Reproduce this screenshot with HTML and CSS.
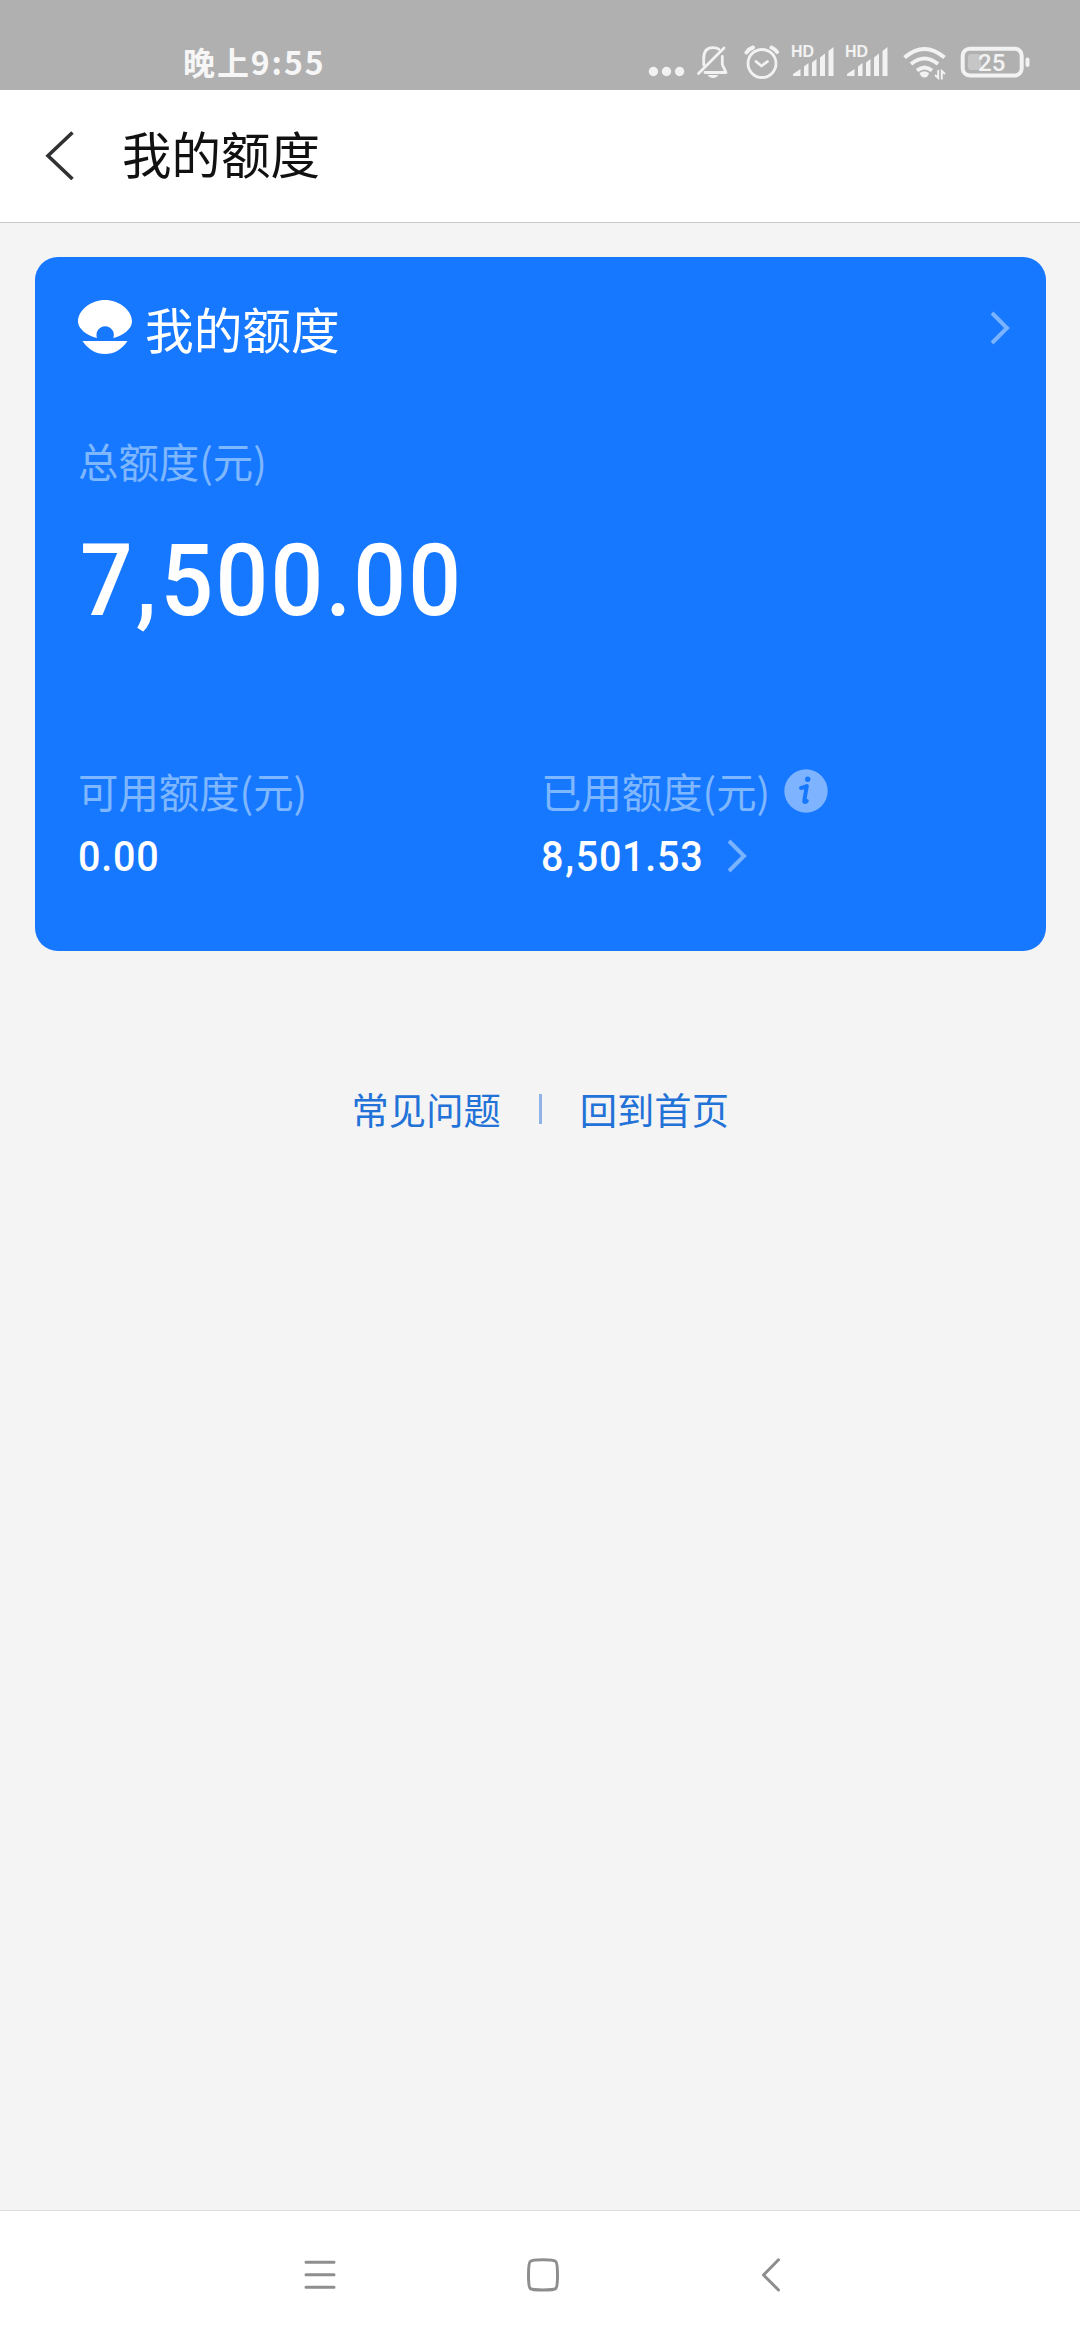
FILE: index.html
```
<!DOCTYPE html>
<html lang="zh-CN">
<head>
<meta charset="utf-8">
<title>我的额度</title>
<link rel="stylesheet" href="styles.css">
</head>
<body>
<div class="screen">
  <div class="status">
    <span class="clock">晚上9:55</span>
    <div class="status-icons">
      <svg class="dots" width="37" height="44" viewBox="648 40 37 44"><circle cx="653.4" cy="71.5" r="4.7"/><circle cx="666.5" cy="71.5" r="4.7"/><circle cx="679.6" cy="71.5" r="4.7"/></svg>
      <svg class="bell" width="33" height="44" viewBox="696 40 33 44"><path class="line" d="M698.5 73.5 724 48M703.7 65V58.5Q703.7 47.6 713 47.6Q716.5 47.6 718.8 49.2M722.3 56.5V64.5L726 72.5H705"/><path d="M707.5 75H718.5Q716.5 78 713 78Q709.500 78 707.500 75Z"/></svg>
      <svg class="alarm" width="36" height="44" viewBox="744 40 36 44"><circle class="line" cx="762" cy="63.500" r="14"/><path class="line" d="M756 61.500 761.500 66 767.500 61.500"/><path class="line thick" d="M746.500 52.500Q749 48.800 753 47.500M771.500 47.500Q775 49 777 52"/></svg>
      <svg class="signal" width="43" height="44" viewBox="791 40 43 44"><text x="791" y="57" textLength="23" lengthAdjust="spacingAndGlyphs">HD</text><path d="M793 76V74L800.500 69V76ZM804 76V66.500L808.500 63V76ZM812 76V62.500L816.500 59V76ZM820 76V57.500L825 53.500V76ZM828.500 76V51L833.500 47V76Z"/></svg>
      <svg class="signal second" width="43" height="44" viewBox="791 40 43 44"><text x="791" y="57" textLength="23" lengthAdjust="spacingAndGlyphs">HD</text><path d="M793 76V74L800.500 69V76ZM804 76V66.500L808.500 63V76ZM812 76V62.500L816.500 59V76ZM820 76V57.500L825 53.500V76ZM828.500 76V51L833.500 47V76Z"/></svg>
      <svg class="wifi" width="44" height="44" viewBox="903 40 44 44"><path class="arc" d="M904.500 57.500Q924.500 40.500 944.500 57.500M911 64Q924.500 53 938 64M917 70.500Q924.500 64.500 932 70.500"/><path d="M919.500 73Q924.500 69.500 929 73Q928 77.500 924.300 77.500Q921 77.500 919.500 73Z"/><path class="tiny" d="M935 75 938.200 78V70M945 74 941.800 71V79.500"/></svg>
      <svg class="battery" width="70" height="44" viewBox="960 40 70 44"><rect class="frame" x="962.700" y="48.700" width="59" height="26.800" rx="7"/><rect class="charge" x="968" y="54" width="13" height="16" rx="3"/><rect x="1025.500" y="57.500" width="4" height="9.500" rx="2"/><text x="978" y="71">25</text></svg>
    </div>
  </div>
  <header class="header">
    <svg class="back" width="30" height="50" viewBox="45 129 30 50"><path d="M72.500 131.500 48 154.800 72.500 178"/></svg>
    <h1 class="title">我的额度</h1>
  </header>
  <main class="content">
    <section class="card">
      <div class="card-head">
        <svg class="logo" width="54" height="54" viewBox="0 0 54 54"><path d="M27 0C41 0 54 10 54 21.500C54 29 45 35.500 35.300 38A8.700 8.700 0 1 0 19 38C9 35.500 0 29 0 21.500C0 10 13 0 27 0Z"/><path d="M4.500 41H49.500C44 49.500 36 54 27 54C18 54 10 49.500 4.500 41Z"/></svg>
        <h2 class="card-title">我的额度</h2>
        <svg class="chevron" width="20" height="34" viewBox="0 0 20 34"><path d="M2 2 17 17 2 32"/></svg>
      </div>
      <div class="label">总额度(元)</div>
      <div class="total"><span class="number">7<span class="comma">,</span>500.00</span></div>
      <div class="split">
        <div>
          <div class="label">可用额度(元)</div>
          <div class="amount"><span class="number">0.00</span></div>
        </div>
        <div>
          <div class="label">已用额度(元)
            <svg class="info" width="44" height="44" viewBox="0 0 44 44"><circle cx="22" cy="22" r="21.700"/><circle class="mark" cx="23.700" cy="10.200" r="2.700"/><path class="stem" d="M17 19Q20 18.500 22.800 17L20.300 31.500Q20 34 22.800 32"/></svg>
          </div>
          <div class="amount"><span class="number used">8<span class="comma">,</span>501.53</span>
            <svg class="chevron" width="20" height="34" viewBox="0 0 20 34"><path d="M2 2 17 17 2 32"/></svg>
          </div>
        </div>
      </div>
    </section>
    <nav class="links"><a>常见问题</a><span class="divider"></span><a>回到首页</a></nav>
  </main>
  <footer class="navbar">
    <svg width="32" height="36" viewBox="0 0 32 36"><path d="M2 5.200H30M2 17.800H30M2 30.200H30"/></svg>
    <svg width="34" height="36" viewBox="0 0 34 36"><path d="M17 2.800Q28 2.800 29.800 4.500Q31.500 6 31.500 18Q31.500 30 29.800 31.500Q28 33 17 33Q6 33 4.200 31.500Q2.500 30 2.500 18Q2.500 6 4.200 4.500Q6 2.800 17 2.800Z"/></svg>
    <svg width="20" height="36" viewBox="0 0 20 36"><path d="M17.500 2.800 2.500 18 17.500 33"/></svg>
  </footer>
</div>
</body>
</html>
```
FILE: styles.css
```
* { box-sizing: border-box; }
body { margin: 0; }
h1, h2 { margin: 0; font-weight: 400; }
svg { display: block; flex: none; }

.screen {
  display: flex;
  flex-direction: column;
  width: 1080px;
  height: 2340px;
  background: #f4f4f4;
  font-family: "Noto Sans CJK SC", sans-serif;
  white-space: nowrap;
  overflow: hidden;
}

.status {
  display: flex;
  justify-content: space-between;
  height: 90px;
  padding: 40px 50px 0 183px;
  background: #b0b0b0;
  color: #f6f6f6;
}
.clock { font-size: 32px; font-weight: 700; line-height: 42px; letter-spacing: 1.900px; }
.status-icons { display: flex; fill: #f2f2f2; }
.status-icons .line { fill: none; stroke: #f2f2f2; stroke-width: 2.800; stroke-linecap: round; stroke-linejoin: round; }
.status-icons .thick { stroke-width: 4; }
.bell { margin-left: 11px; }
.alarm { margin-left: 15px; }
.signal { margin-left: 11px; }
.signal text { font: 700 16.500px "Liberation Sans", sans-serif; }
.wifi { margin-left: 15px; }
.wifi .arc { fill: none; stroke: #f2f2f2; stroke-width: 4; }
.wifi .tiny { fill: none; stroke: #f2f2f2; stroke-width: 2; }
.battery { margin-left: 13px; }
.battery .frame { fill: none; stroke: #f2f2f2; stroke-width: 4; }
.battery .charge { fill: #c6c6c6; }
.battery text { font: 500 24px Roboto, sans-serif; }

.header {
  display: flex;
  align-items: center;
  gap: 47px;
  height: 133px;
  padding: 0 45px 3px;
  background: #fff;
  border-bottom: 1px solid #c4c8c6;
}
.back path { fill: none; stroke: #303133; stroke-width: 3.600; }
.title { padding-bottom: 4px; color: #111; font-size: 49.500px; line-height: 70px; }

.content { flex: 1; padding: 34px 34.500px 0 35px; }
.card {
  height: 694px;
  padding: 36px 36px 0 43px;
  border-radius: 23px;
  background: #1677ff;
  color: #fff;
}
.card-head { display: flex; align-items: center; height: 70px; fill: #fff; }
.logo { margin-bottom: 2px; }
.card-title { flex: 1; margin-left: 13px; font-size: 48.700px; line-height: 70px; }
.chevron path { fill: none; stroke: #7ab3ff; stroke-width: 4; }
.label { display: flex; align-items: center; height: 60px; color: #7fb7ff; font-size: 40.400px; line-height: 60px; }
.card > .label { margin-top: 68px; }
.total {
  margin-top: 35px;
  height: 110px;
  padding-left: 2px;
  font: 500 101px/110px Roboto, sans-serif;
  letter-spacing: 2.300px;
}
.number { display: inline-block; transform: scaleX(0.92); transform-origin: left; }
.total .comma { margin: 0 2px 0 1px; }
.split { display: grid; grid-template-columns: 463px 1fr; margin-top: 125px; }
.amount { display: flex; align-items: center; height: 70px; font: 500 43px/70px Roboto, sans-serif; letter-spacing: 0.800px; }
.amount .comma { margin: 0 1px; }
.used { width: 175px; }
.amount .chevron { margin-left: 11px; }
.info { margin-left: 14px; fill: #7db3ff; }
.info .mark { fill: #1677ff; }
.info .stem { fill: none; stroke: #1677ff; stroke-width: 4; stroke-linecap: round; stroke-linejoin: round; }

.links { display: flex; align-items: center; justify-content: center; height: 60px; margin-top: 128px; color: #2272d8; font-size: 37.300px; line-height: 60px; }
.divider { width: 3px; height: 30px; margin: 0 38px; background: #8fb3e6; }

.navbar {
  display: flex;
  align-items: flex-start;
  height: 130px;
  padding: 46px 0 0 304px;
  background: #fff;
  border-top: 1px solid #dcdcdc;
  fill: none;
  stroke: #8e8e8e;
  stroke-width: 3;
  stroke-linecap: round;
  stroke-linejoin: round;
}
.navbar svg:nth-child(2) { margin-left: 190px; }
.navbar svg:nth-child(3) { margin-left: 201px; }
```
